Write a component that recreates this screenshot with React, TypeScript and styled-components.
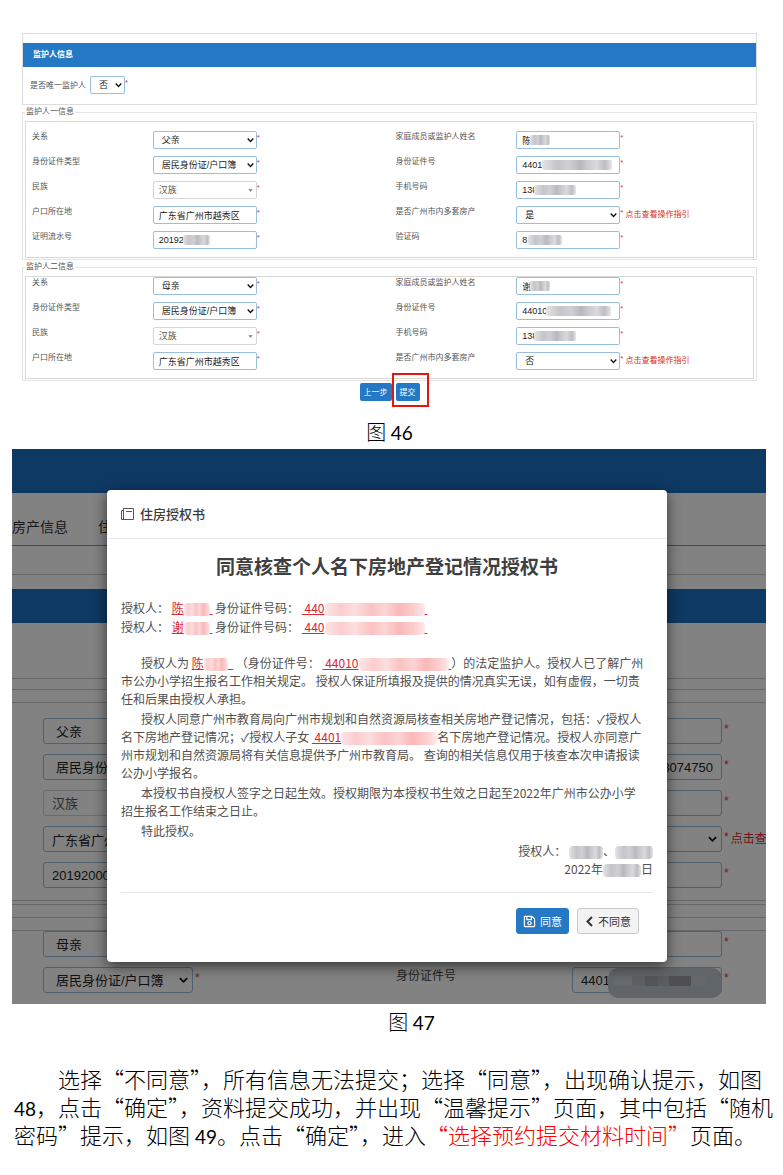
import React from "react";
import styled, { createGlobalStyle, css } from "styled-components";
import { FaRegSave } from "react-icons/fa";

const BLUE = "#2478c4";

const GlobalStyle = createGlobalStyle`
  *, *::before, *::after { box-sizing: border-box; }
  body {
    margin: 0;
    background: #fff;
    color: #000;
    font-family: "Liberation Sans", "Noto Sans CJK SC", sans-serif;
  }
`;

const Page = styled.main`
  display: flex;
  flex-direction: column;
  padding-top: 33px;
`;

/* ---------- shared form parts ---------- */

type Size = "small" | "large";

const ControlWrap = styled.span<{ $size: Size; $width?: number }>`
  position: relative;
  display: block;
  flex: none;
  width: ${(p) => p.$width ?? (p.$size === "small" ? 104 : 150)}px;
  height: ${(p) => (p.$size === "small" ? 18 : 26)}px;
`;

const fieldStyle = css<{ $size: Size; $muted?: boolean; $indent?: boolean }>`
  display: block;
  width: 100%;
  height: 100%;
  margin: 0;
  border: 1px solid ${(p) => (p.$muted ? "#d5d5d5" : "#98bfdd")};
  border-radius: ${(p) => (p.$size === "small" ? 2 : 3)}px;
  background: transparent;
  color: ${(p) => (p.$muted ? "#555" : "#222")};
  font-family: "Liberation Sans", "Noto Sans CJK SC", sans-serif;
  font-size: ${(p) => (p.$size === "small" ? 9 : 13)}px;
  padding: 0 ${(p) => (p.$size === "small" ? 5 : 8)}px;
  padding-left: ${(p) => (p.$size === "small" ? (p.$indent ? 8 : 5) : p.$indent ? 12 : 8)}px;
  outline: none;
`;

const SelectField = styled.select`
  ${fieldStyle}
  appearance: none;
`;

const TextField = styled.input<{ $right?: boolean }>`
  ${fieldStyle}
  text-align: ${(p) => (p.$right ? "right" : "left")};
`;

const Arrow = styled.svg<{ $size: Size }>`
  position: absolute;
  top: 50%;
  right: ${(p) => (p.$size === "small" ? 3 : 5)}px;
  width: ${(p) => (p.$size === "small" ? 7 : 9)}px;
  height: ${(p) => (p.$size === "small" ? 7 : 9)}px;
  transform: translateY(-50%);
  pointer-events: none;
`;

const greyTones =
  "linear-gradient(90deg, #e4e4e6 0%, #c4c4c9 22%, #d0d0d4 38%, #b8b8be 54%, #cbcbd0 66%, #dadadd 78%, #bdbdc2 90%, #e6e6e8 100%)";
const pinkTones =
  "linear-gradient(90deg, #fde6e6 0%, #fccdcd 16%, #fbdede 30%, #fbc2c4 46%, #fcd5d5 60%, #fab8ba 74%, #fccccc 88%, #fdeaea 100%)";
const dimTones =
  "linear-gradient(90deg, #c9d0d5 0 20%, #b7bcc1 20% 34%, #a5a7aa 34% 48%, #b0b2b5 48% 60%, #9b9c9f 60% 84%, #c4ccd2 84% 100%)";

const FieldMask = styled.span<{ $left: number; $width: number; $large?: boolean }>`
  position: absolute;
  top: ${(p) => (p.$large ? 1 : 4)}px;
  left: ${(p) => p.$left}px;
  width: ${(p) => p.$width}px;
  height: ${(p) => (p.$large ? 30 : 10)}px;
  border-radius: ${(p) => (p.$large ? 10 : 2)}px;
  background: ${(p) => (p.$large ? "#bcc7cf" : greyTones)};
  &::after {
    content: "";
    position: absolute;
    inset: 8px 16px 12px 6px;
    display: ${(p) => (p.$large ? "block" : "none")};
    background: ${dimTones};
  }
`;

const Mask = styled.span<{ $width: number; $grey?: boolean }>`
  display: inline-block;
  width: ${(p) => p.$width}px;
  height: 13px;
  border-radius: 4px;
  vertical-align: middle;
  background: ${(p) => (p.$grey ? greyTones : pinkTones)};
`;

const Star = styled.span<{ $size: Size }>`
  color: #e2353f;
  font-size: ${(p) => (p.$size === "small" ? 8 : 12)}px;
  line-height: ${(p) => (p.$size === "small" ? 14 : 22)}px;
  padding-left: ${(p) => (p.$size === "small" ? 0 : 2)}px;
`;

const GuideLink = styled.a<{ $size: Size }>`
  color: #e01f2d;
  text-decoration: none;
  white-space: nowrap;
  font-size: ${(p) => (p.$size === "small" ? 8 : 12)}px;
  line-height: ${(p) => (p.$size === "small" ? 18 : 26)}px;
  padding-left: 2px;
`;

const Cell = styled.div`
  display: flex;
  align-items: flex-start;
  min-width: 0;
`;

interface FieldData {
  id: string;
  label: string;
  value: string;
  kind?: "select" | "picker" | "text";
  mask?: [number, number];
  guide?: boolean;
  right?: boolean;
  hideStar?: boolean;
}

function Field({ data, size, width }: { data: FieldData; size: Size; width?: number }) {
  const isSelect = data.kind === "select" || data.kind === "picker";
  const muted = data.kind === "picker";
  return (
    <Cell>
      <ControlWrap $size={size} $width={width}>
        {isSelect ? (
          <>
            <SelectField
              id={data.id}
              aria-label={data.label}
              defaultValue={data.value}
              $size={size}
              $muted={muted}
              $indent={!muted}
            >
              <option>{data.value}</option>
            </SelectField>
            <Arrow $size={size} viewBox="0 0 10 10" aria-hidden="true">
              {muted ? (
                <path d="M2 4h6L5 7.5z" fill="#777" />
              ) : (
                <path d="M1 3l4 4 4-4" fill="none" stroke="#111" strokeWidth="2" />
              )}
            </Arrow>
          </>
        ) : (
          <TextField
            id={data.id}
            aria-label={data.label}
            defaultValue={data.value}
            $size={size}
            $right={data.right}
          />
        )}
        {data.mask && (
          <FieldMask $left={data.mask[0]} $width={data.mask[1]} $large={size === "large"} />
        )}
      </ControlWrap>
      {!data.hideStar && <Star $size={size}>*</Star>}
      {data.guide && (
        <GuideLink $size={size} href="#guide">
          点击查看操作指引
        </GuideLink>
      )}
    </Cell>
  );
}

/* ---------- figure 46: guardian form ---------- */

const FormFigure = styled.section`
  margin: 0 26px 0 22px;
  color: #555;
`;

const Panel = styled.div`
  border: 1px solid #ddd;
  padding-top: 9px;
`;

const PanelTitle = styled.h2`
  margin: 0;
  padding-left: 10px;
  background: ${BLUE};
  color: #fff;
  font-size: 8px;
  line-height: 24px;
`;

const OnlyRow = styled.div`
  display: flex;
  align-items: flex-start;
  gap: 4px;
  padding: 9px 0 8px 7px;
`;

const Label = styled.label<{ $size: Size }>`
  color: ${(p) => (p.$size === "small" ? "#555" : "#444")};
  font-size: ${(p) => (p.$size === "small" ? 8 : 12)}px;
  line-height: ${(p) => (p.$size === "small" ? 12 : 18)}px;
  white-space: nowrap;
`;

const OnlyLabel = styled(Label)`
  line-height: 20px;
`;

const Group = styled.fieldset`
  min-width: 0;
  margin: 1px 0 0;
  padding: 0 2px 1px;
  border: 1px solid #e4e4e4;
`;

const Legend = styled.legend`
  padding: 0 1px;
  color: #555;
  font-size: 8px;
  line-height: 12px;
`;

const Rows = styled.div<{ $flush?: boolean }>`
  display: grid;
  grid-template-columns: 121fr 243fr 121fr 237fr;
  row-gap: 7px;
  margin-top: 3px;
  padding: ${(p) => (p.$flush ? 0 : 9)}px 0 8px 6px;
  border: 1px solid #d8d8d8;
`;

const Actions = styled.div`
  display: flex;
  justify-content: center;
  gap: 4px;
  margin-top: 2px;
`;

const SmallButton = styled.button`
  height: 18px;
  padding: 0 4px;
  border: 0;
  border-radius: 2px;
  background: ${BLUE};
  color: #fff;
  font-family: "Noto Sans CJK SC", sans-serif;
  font-size: 8px;
  line-height: 18px;
`;

const Highlight = styled.span`
  position: relative;
  display: flex;
  &::after {
    content: "";
    position: absolute;
    inset: -10px -9px -6px -4px;
    border: 2px solid #e8150f;
    pointer-events: none;
  }
`;

const firstGuardian: FieldData[] = [
  { id: "a-rel", label: "关系", value: "父亲", kind: "select" },
  { id: "a-name", label: "家庭成员或监护人姓名", value: "陈", mask: [14, 20] },
  { id: "a-type", label: "身份证件类型", value: "居民身份证/户口簿", kind: "select" },
  { id: "a-no", label: "身份证件号", value: "4401", mask: [26, 70] },
  { id: "a-nation", label: "民族", value: "汉族", kind: "picker" },
  { id: "a-phone", label: "手机号码", value: "138", mask: [18, 42] },
  { id: "a-home", label: "户口所在地", value: "广东省广州市越秀区" },
  { id: "a-house", label: "是否广州市内多套房产", value: "是", kind: "select", guide: true },
  { id: "a-serial", label: "证明流水号", value: "20192", mask: [30, 27] },
  { id: "a-code", label: "验证码", value: "8", mask: [12, 34] },
];

const secondGuardian: FieldData[] = [
  { id: "b-rel", label: "关系", value: "母亲", kind: "select" },
  { id: "b-name", label: "家庭成员或监护人姓名", value: "谢", mask: [14, 20] },
  { id: "b-type", label: "身份证件类型", value: "居民身份证/户口簿", kind: "select" },
  { id: "b-no", label: "身份证件号", value: "44010", mask: [30, 65] },
  { id: "b-nation", label: "民族", value: "汉族", kind: "picker" },
  { id: "b-phone", label: "手机号码", value: "138", mask: [18, 42] },
  { id: "b-home", label: "户口所在地", value: "广东省广州市越秀区" },
  { id: "b-house", label: "是否广州市内多套房产", value: "否", kind: "select", guide: true },
];

function Guardian({ title, fields, flush }: { title: string; fields: FieldData[]; flush?: boolean }) {
  return (
    <Group>
      <Legend>{title}</Legend>
      <Rows $flush={flush}>
        {fields.map((f) => (
          <React.Fragment key={f.id}>
            <Label $size="small" htmlFor={f.id}>
              {f.label}
            </Label>
            <Field data={f} size="small" />
          </React.Fragment>
        ))}
      </Rows>
    </Group>
  );
}

/* ---------- figure 47: authorisation dialog ---------- */

const DialogFigure = styled.section`
  position: relative;
  overflow: hidden;
  margin: 0 17px 0 12px;
  background: #fff;
`;

const TopBar = styled.div`
  height: 44px;
  background: #1a70c2;
`;

const Nav = styled.nav`
  display: flex;
  gap: 30px;
  height: 53px;
  padding-top: 24px;
  border-bottom: 1px solid #6b9cc4;
`;

const NavLink = styled.a`
  color: #333;
  font-size: 14px;
  line-height: 20px;
  text-decoration: none;
`;

const Strip = styled.div<{ $height: number; $line?: boolean }>`
  height: ${(p) => p.$height}px;
  border-bottom: ${(p) => (p.$line ? "1px solid #ccc" : "0")};
`;

const SectionBar = styled.div`
  height: 34px;
  background: #1a70c2;
`;

const BackRows = styled.div`
  display: grid;
  grid-template-columns: 353fr 176fr 194fr;
  row-gap: 10px;
  padding-left: 31px;
`;

const Shade = styled.div`
  position: absolute;
  inset: 0;
  background: rgba(0, 0, 0, 0.49);
`;

const Dialog = styled.div`
  position: absolute;
  top: 41px;
  left: 95px;
  right: 99px;
  border-radius: 4px;
  background: #fff;
  color: #505050;
  font-family: "Noto Sans CJK SC", sans-serif;
  font-size: 12px;
  line-height: 18px;
  box-shadow: 0 4px 14px rgba(0, 0, 0, 0.6);
`;

const DialogHeader = styled.header`
  display: flex;
  align-items: center;
  gap: 6px;
  height: 49px;
  padding-left: 14px;
  border-bottom: 1px solid #eaeaea;
  color: #3c3c3c;
  font-size: 13px;
  font-weight: 500;
`;

const DialogBody = styled.div`
  padding: 13px 14px 0;
  white-space: nowrap;
`;

const DialogTitle = styled.h1`
  margin: 0 0 18px;
  color: #3f3f3f;
  font-size: 19px;
  line-height: 28px;
  text-align: center;
`;

const Granters = styled.div`
  margin-bottom: 18px;
  line-height: 19px;
`;

const Clause = styled.p`
  margin: 0 0 2px;
  text-indent: 20px;
`;

const Red = styled.u`
  color: #dd2530;
  text-indent: 0;
`;

const Signature = styled.div`
  padding-bottom: 14px;
  border-bottom: 1px solid #e6e6e6;
  text-align: right;
`;

const DialogFooter = styled.footer`
  display: flex;
  justify-content: flex-end;
  gap: 8px;
  padding: 15px 14px 28px 0;
`;

const DialogButton = styled.button<{ $primary?: boolean }>`
  display: flex;
  align-items: center;
  gap: 4px;
  height: 26px;
  padding: 0 ${(p) => (p.$primary ? 6 : 7)}px;
  border: 1px solid ${(p) => (p.$primary ? BLUE : "#c8c8c8")};
  border-radius: 3px;
  background: ${(p) => (p.$primary ? BLUE : "#f3f3f3")};
  color: ${(p) => (p.$primary ? "#fff" : "#333")};
  font-family: "Noto Sans CJK SC", sans-serif;
  font-size: 11px;
`;

const backFirst: FieldData[] = [
  { id: "c-rel", label: "关系", value: "父亲", kind: "select", hideStar: true },
  { id: "c-name", label: "姓名", value: "" },
  { id: "c-type", label: "身份证件类型", value: "居民身份证/户口簿", kind: "select", hideStar: true },
  { id: "c-no", label: "证件号", value: "8074750", right: true },
  { id: "c-nation", label: "民族", value: "汉族", kind: "picker", hideStar: true },
  { id: "c-phone", label: "手机号码", value: "" },
  { id: "c-home", label: "户口所在地", value: "广东省广州市越秀区", hideStar: true },
  { id: "c-house", label: "多套房产", value: "", kind: "select", guide: true },
  { id: "c-serial", label: "证明流水号", value: "20192000", hideStar: true },
  { id: "c-code", label: "验证码", value: "" },
];

const backSecond: FieldData[] = [
  { id: "d-rel", label: "关系", value: "母亲", kind: "select", hideStar: true },
  { id: "d-name", label: "姓名", value: "" },
  { id: "d-type", label: "身份证件类型", value: "居民身份证/户口簿", kind: "select" },
  { id: "d-no", label: "身份证件号", value: "4401", mask: [36, 114] },
];

function BackForm({ fields }: { fields: FieldData[] }) {
  return (
    <BackRows>
      {fields.map((f, i) => (
        <React.Fragment key={f.id}>
          {i % 2 === 1 && (
            <Label $size="large" htmlFor={f.id}>
              {f.id === "d-no" ? f.label : ""}
            </Label>
          )}
          <Field data={f} size="large" />
        </React.Fragment>
      ))}
    </BackRows>
  );
}

/* ---------- document text ---------- */

const Caption = styled.p<{ $indented?: boolean }>`
  margin: ${(p) => (p.$indented ? "4px 0 28px" : "17px 0 3px")};
  padding-right: 4px;
  font-family: "Noto Sans CJK SC", sans-serif;
  font-size: 20px;
  font-weight: 300;
  line-height: 28px;
  text-align: center;
  text-indent: ${(p) => (p.$indented ? 44 : 0)}px;
`;

const Num = styled.span`
  font-family: Lato, sans-serif;
  font-size: 19px;
  font-weight: 400;
  line-height: 1;
`;

const Paragraph = styled.p`
  margin: 0 0 20px;
  padding-left: 14px;
  font-family: "Noto Sans CJK SC", sans-serif;
  font-size: 22px;
  font-weight: 300;
  line-height: 28px;
  text-indent: 44px;
  white-space: nowrap;
`;

const Emphasis = styled.span`
  color: #f00;
`;

export default function App() {
  return (
    <Page lang="zh-CN">
      <GlobalStyle />
      <FormFigure>
        <Panel>
          <PanelTitle>监护人信息</PanelTitle>
          <OnlyRow>
            <OnlyLabel $size="small" htmlFor="only">
              是否唯一监护人
            </OnlyLabel>
            <Field
              size="small"
              width={35}
              data={{ id: "only", label: "是否唯一监护人", value: "否", kind: "select" }}
            />
          </OnlyRow>
        </Panel>
        <Guardian title="监护人一信息" fields={firstGuardian} />
        <Guardian title="监护人二信息" fields={secondGuardian} flush />
        <Actions>
          <SmallButton type="button">上一步</SmallButton>
          <Highlight>
            <SmallButton type="button">提交</SmallButton>
          </Highlight>
        </Actions>
      </FormFigure>
      <Caption>
        图 <Num>46</Num>
      </Caption>

      <DialogFigure>
        <TopBar />
        <Nav>
          <NavLink href="#house">房产信息</NavLink>
          <NavLink href="#live">住</NavLink>
        </Nav>
        <Strip $height={29} $line />
        <Strip $height={14} />
        <SectionBar />
        <Strip $height={56} $line />
        <Strip $height={11} $line />
        <Strip $height={13} $line />
        <Strip $height={15} />
        <BackForm fields={backFirst} />
        <Strip $height={13} $line />
        <Strip $height={4} $line />
        <Strip $height={13} $line />
        <Strip $height={13} $line />
        <BackForm fields={backSecond} />
        <Strip $height={11} />
        <Shade />
        <Dialog role="dialog" aria-labelledby="dialog-name">
          <DialogHeader>
            <svg width="13" height="12" viewBox="0 0 13 12" fill="none" stroke="#555" aria-hidden="true">
              <path d="M2.5 .5h10v11h-12v-9h2zM2.5 .5v11M5 3.5h6" />
            </svg>
            <span id="dialog-name">住房授权书</span>
          </DialogHeader>
          <DialogBody>
            <DialogTitle>同意核查个人名下房地产登记情况授权书</DialogTitle>
            <Granters>
              授权人： <Red>陈<Mask $width={26} />&nbsp;</Red> 身份证件号码：{" "}
              <Red>&nbsp;440<Mask $width={100} />&nbsp;</Red>
              <br />
              授权人： <Red>谢<Mask $width={26} />&nbsp;</Red> 身份证件号码：{" "}
              <Red>&nbsp;440<Mask $width={100} />&nbsp;</Red>
            </Granters>
            <Clause>
              授权人为 <Red>陈<Mask $width={24} />&nbsp;&nbsp;</Red> （身份证件号：{" "}
              <Red>&nbsp;44010<Mask $width={90} />&nbsp;</Red>
              ）的法定监护人。授权人已了解广州
              <br />
              市公办小学招生报名工作相关规定。 授权人保证所填报及提供的情况真实无误，如有虚假，一切责
              <br />
              任和后果由授权人承担。
            </Clause>
            <Clause>
              授权人同意广州市教育局向广州市规划和自然资源局核查相关房地产登记情况，包括：✓授权人
              <br />
              名下房地产登记情况；✓授权人子女 <Red>&nbsp;4401<Mask $width={96} /></Red>
              名下房地产登记情况。授权人亦同意广
              <br />
              州市规划和自然资源局将有关信息提供予广州市教育局。 查询的相关信息仅用于核查本次申请报读
              <br />
              公办小学报名。
            </Clause>
            <Clause>
              本授权书自授权人签字之日起生效。授权期限为本授权书生效之日起至2022年广州市公办小学
              <br />
              招生报名工作结束之日止。
            </Clause>
            <Clause>特此授权。</Clause>
            <Signature>
              授权人： <Mask $width={34} $grey />、<Mask $width={38} $grey />
              <br />
              2022年<Mask $width={38} $grey />日
            </Signature>
            <DialogFooter>
              <DialogButton type="button" $primary>
                <FaRegSave size={13} />
                同意
              </DialogButton>
              <DialogButton type="button">
                <svg width="9" height="11" viewBox="0 0 9 11" fill="none" stroke="#333" strokeWidth="2" aria-hidden="true">
                  <path d="M7 1L2.5 5.500L7 10" />
                </svg>
                不同意
              </DialogButton>
            </DialogFooter>
          </DialogBody>
        </Dialog>
      </DialogFigure>
      <Caption $indented>
        图 <Num>47</Num>
      </Caption>

      <Paragraph>
        选择“不同意”，所有信息无法提交；选择“同意”，出现确认提示，如图
        <br />
        <Num>48</Num>，点击“确定”，资料提交成功，并出现“温馨提示”页面，其中包括“随机
        <br />
        密码”提示，如图 <Num>49</Num>。点击“确定”，进入<Emphasis>“选择预约提交材料时间”</Emphasis>页面。
      </Paragraph>
    </Page>
  );
}
